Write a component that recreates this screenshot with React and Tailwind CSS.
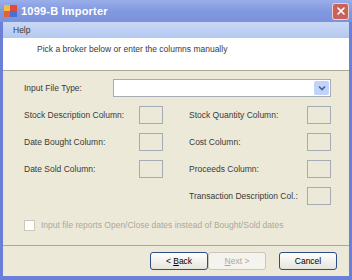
import { X } from "lucide-react";

const font = { fontFamily: '"Liberation Sans", Tahoma, sans-serif' };

const ColBox = () => (
  <div className="w-[24px] h-[18px] border border-[#a5acb5] bg-[#ece9d8]" />
);

const Field = ({ label }) => (
  <div className="flex items-center justify-between h-[18px]">
    <span className="whitespace-nowrap">{label}</span>
    <ColBox />
  </div>
);

const Button = ({ children, disabled, className = "" }) => (
  <div
    className={
      "h-[18px] w-[58px] rounded-[3px] border flex items-center justify-center whitespace-pre " +
      (disabled
        ? "border-[#c9c7ba] text-[#aca899] bg-[#f4f3ee] "
        : "border-[#2b4f86] text-black bg-gradient-to-b from-white to-[#e6e4dc] ") +
      className
    }
  >
    {children}
  </div>
);

export default function App() {
  return (
    <div
      className="w-[352px] h-[280px] bg-[#6b7fd7] flex flex-col overflow-hidden text-[8.5px] text-[#3a3a3a]"
      style={font}
    >
      {/* title bar */}
      <div className="h-[22px] flex items-center bg-gradient-to-b from-[#9aaeea] via-[#8199e0] to-[#7b92dc] pl-[4px] pr-[3px]">
        <div className="w-[14px] h-[14px] relative mr-[3px]">
          <div className="absolute left-0 top-[1px] w-[7px] h-[6px] bg-[#f0c040]" />
          <div className="absolute left-[6px] top-[1px] w-[7px] h-[6px] bg-[#e04a3a]" />
          <div className="absolute left-0 top-[7px] w-[7px] h-[6px] bg-[#e06040]" />
          <div className="absolute left-[6px] top-[7px] w-[7px] h-[6px] bg-[#4a70d0]" />
        </div>
        <span className="text-white font-bold text-[11px] tracking-[0.2px]">1099-B Importer</span>
        <div className="ml-auto w-[17px] h-[17px] rounded-[3px] border border-white/70 bg-[#c8625a] flex items-center justify-center">
          <X size={12} strokeWidth={3.2} color="white" />
        </div>
      </div>
      {/* window body */}
      <div className="flex-1 flex flex-col mx-[3px] mb-[4px] bg-[#ece9d8]">
        <div className="h-[16px] flex items-center px-[10px] bg-gradient-to-b from-[#c9d8f5] to-[#b4c8f0]">
          Help
        </div>
        <div className="h-[33px] bg-white pl-[34px] pt-[5px] border-b border-[#aca899]">
          Pick a broker below or enter the columns manually
        </div>
        <div className="flex-1 flex flex-col pl-[21px] pr-[18px] pt-[8px]">
          <div className="flex items-center h-[18px]">
            <span className="w-[89px]">Input File Type:</span>
            <div className="flex-1 h-[18px] bg-white border border-[#a5acb5] flex justify-end items-center pr-[1px]">
              <div className="w-[15px] h-[14px] rounded-[2px] bg-[#c1d3fb] flex items-center justify-center">
                <svg width="8" height="6" viewBox="0 0 8 6">
                  <path d="M1 1.5 L4 4.5 L7 1.5" stroke="#4d6185" strokeWidth="1.6" fill="none" />
                </svg>
              </div>
            </div>
          </div>
          <div className="grid grid-cols-[139px_142px] gap-x-[26px] gap-y-[9px] mt-[9px]">
            <Field label="Stock Description Column:" />
            <Field label="Stock Quantity Column:" />
            <Field label="Date Bought Column:" />
            <Field label="Cost Column:" />
            <Field label="Date Sold Column:" />
            <Field label="Proceeds Column:" />
            <div />
            <Field label="Transaction Description Col.:" />
          </div>
          <div className="flex items-center mt-[14px] text-[#aca899]">
            <div className="w-[11px] h-[11px] border border-[#cac8bb] bg-white mr-[6px]" />
            Input file reports Open/Close dates instead of Bought/Sold dates
          </div>
        </div>
        <div className="h-[31px] border-t border-[#aca899] flex items-center pl-[147px]">
          <Button>
            {"< "}<u>B</u>ack
          </Button>
          <Button disabled>
            <u>N</u>ext{" >"}
          </Button>
          <Button className="ml-[13px]">Cancel</Button>
        </div>
      </div>
    </div>
  );
}
